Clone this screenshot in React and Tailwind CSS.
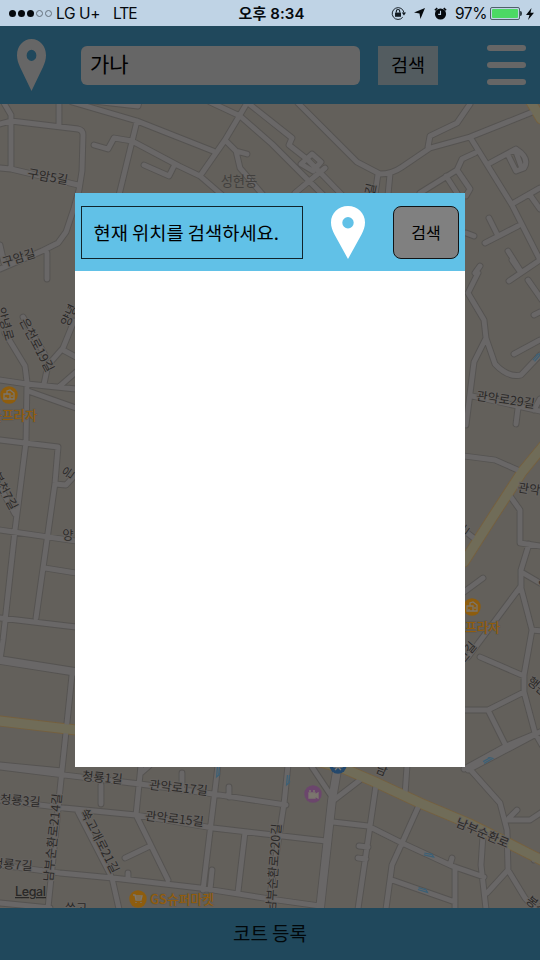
const roads = [
  'M0 124 L11 121 L78 129 Q83 130 83 135 L82 171 L79 190 L74 208 L66 232 L58 243 L42 251 L0 269',
  'M4 103 L11 115 V168', 'M0 168 L11 169 L78 185', 'M59 103 V126', 'M72 102 L137 121 L213 151',
  'M137 121 L119 195', 'M94 145 L108 149 L114 138 L132 141 L179 166 L200 176 L222 195',
  'M144 165 L169 176 L175 164', 'M210 102 L240 116 L272 144 L324 196', 'M200 176 L225 140 L247 103',
  'M248 103 L292 138 L289 145 L308 160 L342 195', 'M225 140 L236 151 L247 154', 'M236 151 L240 168 L263 195', 'M84 100 L138 106 L139 102',
  'M301 164 L312 154 L321 162 L313 171 Z', 'M295 193 L325 168',
  'M298 103 L357 162 L380 174 Q392 174 402 167 L430 148 L470 137 L535 111', 'M470 104 L457 123 L430 136 L428 147',
  'M470 137 L512 205 L540 260', 'M475 153 L462 159 L457 170 L420 193', 'M446 176 L457 193', 'M457 170 L470 189 L466 196', 'M378 174 L375 195', 'M390 174 L388 195',
  'M490 163 L516 149 Q530 158 524 168 L516 171 L508 155', 'M516 152 L521 166', 'M512 204 L540 188', 'M530 195 L540 209', 'M485 243 L518 226', 'M489 218 L497 234', 'M508 251 L520 270', 'M466 233 L474 236', 'M475 273 L480 266',
  'M478 273 L468 293 L484 320 L486 338 L474 362 L466 425', 'M486 338 L495 364 Q508 378 521 375 L540 355', 'M514 354 L540 340', 'M509 281 L540 260', 'M512 260 L519 270', 'M534 315 L540 312', 'M528 280 L542 300',
  'M472 396 L540 411', 'M518 408 L516 424', 'M534 410 L540 399', 'M464 456 L495 460 L520 471', 'M510 496 L520 510 V543 L540 546', 'M529 544 L521 570 V588 L532 630 L524 675 V692 L535 733 L542 745',
  'M521 586 L468 657', 'M483 578 L464 592', 'M523 573 L540 583', 'M532 630 L542 631', 'M480 657 L524 676', 'M524 692 L488 710 H464', 'M488 710 L506 746', 'M542 731 L506 746 L464 769', 'M466 532 L475 539',
  'M47 253 V279', 'M0 245 L4 263', 'M0 380 L27 384 L76 389', 'M5 333 L25 366 L27 382 L26 442 L15 530 L3 640 L0 660', 'M28 391 L76 408', 'M44 384 L48 365 L63 348 L74 321', 'M63 350 L76 357', 'M60 386 L76 372', 'M0 440 L58 447 L55 483 L36 618', 'M55 484 L66 485 L76 474', 'M0 487 L15 514', 'M23 317 L45 355',
  'M0 530 L76 541', 'M45 568 L76 573', 'M0 618 L76 627', 'M72 675 L62 770 L48 908', 'M0 765 L62 771',
  'M0 767 L64 775 L140 784 L213 794 L286 805', 'M0 800 L64 808 L136 815 L213 828 L326 841', 'M0 865 L60 873 L113 878 L200 888 L270 899 L320 906', 'M0 903 L50 908',
  'M141 765 L136 815 L168 880', 'M149 766 L141 773', 'M148 847 L125 858', 'M101 785 V804', 'M182 773 V790', 'M218 765 L203 890', 'M229 787 V797', 'M245 832 L238 892', 'M212 870 L210 890', 'M78 812 L112 878 L119 909', 'M128 873 V878',
  'M288 765 L284 804 L270 895', 'M312 767 L330 794', 'M334 800 L360 780', 'M333 822 L368 826 L402 843 L452 866 L484 877', 'M376 785 L358 909', 'M420 803 L402 843 L392 865 L386 909', 'M407 766 L405 795', 'M392 880 L455 902', 'M455 867 V909', 'M483 835 L481 865 L486 909', 'M487 893 L508 870', 'M452 858 L450 865', 'M359 846 L368 847', 'M358 858 L366 859',
  'M468 767 L500 803 L507 830 L508 870 L525 898 L535 909', 'M507 820 H530 L542 812', 'M509 818 L517 810', 'M468 770 L510 748 L542 731', 'M540 856 L534 860',
]
const wideRoads = ['M0 660 L76 672', 'M338 765 L332 800 L320 909']
const avenues = ['M0 721 L76 730', 'M545 444 L522 472 L492 518 L464 562', 'M314 760 L345 769 L375 782 L420 803 L470 824 L510 844 L545 862', 'M531 102 L541 119']

// One-way arrows: x, y, angle
const arrows = [[218, 772, 95], [288, 780, 95], [488, 760, -30], [537, 357, -50], [429, 855, 12], [423, 890, 17]]

const labels = [
  ['구암5길', 47, 181, 10], ['구암길', 20, 262, -17], ['안녕로', 1, 325, 74], ['은천로19길', 33, 347, 62], ['양', 68, 540, 0], ['양녕', 73, 317, -65],
  ['관악로29길', 505, 404, 8], ['관악로', 534, 494, 8], ['행운', 535, 690, 40], ['행', 541, 584, 45], ['길', 375, 190, -78], ['신길', 470, 655, -50], ['은', 467, 531, -55],
  ['봉천7길', 1, 493, 62], ['청룡1길', 102, 782, 5], ['관악로17길', 178, 792, 6], ['관악로15길', 174, 823, 6], ['청룡3길', 20, 805, 4], ['청룡7길', 12, 869, 4],
  ['남부순환로214길', 57, 838, -84], ['쑥고개로21길', 96, 843, 63], ['남부순환로220길', 278, 868, -86], ['남부순환로', 481, 837, 23], ['봉천', 534, 909, 38], ['쑥고', 76, 913, 0], ['은', 72, 475, -55], ['남', 380, 774, 22],
]

function Pin({ className, fill }) {
  return (
    <svg viewBox="0 0 34 53" className={className} preserveAspectRatio="none" aria-hidden="true">
      <path fill={fill} fillRule="evenodd" d="M17 0C7.4 0 0 7.2 0 16.5c0 4.4 1.4 7.8 3.5 12L17 53l13.500-24.500C32.600 24.300 34 20.900 34 16.500 34 7.200 26.600 0 17 0Zm0 11a5.700 5.700 0 1 1 0 11.400A5.700 5.700 0 0 1 17 11Z" />
    </svg>
  )
}

function Poi({ x, y, color, kind }) {
  return (
    <g transform={`translate(${x} ${y})`}>
      <circle r="8.700" fill={color} />
      <g fill="none" stroke="#7b766e" strokeWidth="1.300">
        {kind === 'shop' && <path d="M-5-1H1V4H-5ZM-2-1V-4L1-5L5-2V4H1M-3 2V4M3 0V2" />}
        {kind === 'cart' && <path d="M-5-4H-3L-2 1H3L4-3H-3M-2 3V4M3 3V4M-2-1H3" />}
        {kind === 'film' && <path fill="#7b766e" d="M-4-1H2V4H-4ZM2 1L5-1V4L2 2M-4-3H-2M0-3H2" />}
        {kind === 'metro' && <path d="M-4-4H4V2H-4ZM-3 5L0 2L3 5M-3-1H3" />}
      </g>
    </g>
  )
}

function StreetMap() {
  const common = { fill: 'none', strokeLinejoin: 'round', strokeLinecap: 'round' }
  return (
    <svg viewBox="0 104 540 804" className="block h-[804px] w-[540px]" aria-label="지도">
      <rect y="104" width="540" height="804" fill="#63605b" />
      <g {...common}>
        <path d={roads.join(' ')} stroke="#555351" strokeWidth="6.800" />
        <path d={wideRoads.join(' ')} stroke="#555351" strokeWidth="9.500" />
        <path d={avenues.join(' ')} stroke="#75603f" strokeWidth="11" />
        <path d={roads.join(' ')} stroke="#696767" strokeWidth="4.900" />
        <path d={wideRoads.join(' ')} stroke="#696767" strokeWidth="7.800" />
        <path d={avenues.join(' ')} stroke="#706c58" strokeWidth="9.200" />
      </g>
      <g stroke="#3d6075" strokeWidth="1.200" fill="none">
        {arrows.map(([x, y, angle]) => (
          <path key={`${x}-${y}`} transform={`translate(${x} ${y}) rotate(${angle})`} d="M-5-1H3L5 1H-5M3-1L1-2" />
        ))}
      </g>
      <g fill="#2b2928" stroke="#666360" strokeWidth="2" paintOrder="stroke" fontSize="12.300" textAnchor="middle" className="font-['Noto_Sans_CJK_KR',sans-serif]">
        {labels.map(([name, x, y, angle]) => (
          <text key={`${name}-${x}`} transform={`translate(${x} ${y}) rotate(${angle})`}>{name}</text>
        ))}
      </g>
      <text x="239" y="186" fontSize="13.300" fill="#42403e" textAnchor="middle" className="font-['Noto_Sans_CJK_KR',sans-serif]">성현동</text>
      <Poi x={9} y={395} color="#8e5d0e" kind="shop" />
      <Poi x={472} y={607} color="#8e5d0e" kind="shop" />
      <Poi x={138} y={899} color="#8e5d0e" kind="cart" />
      <Poi x={313} y={794} color="#6b466c" kind="film" />
      <Poi x={338} y={765} color="#24486c" kind="metro" />
      <g fontSize="12.700" fill="#925d0c" stroke="#5f5a52" strokeWidth="1.500" paintOrder="stroke" className="font-['Noto_Sans_CJK_KR',sans-serif] font-medium">
        <text x="37" y="420" textAnchor="end">서울프라자</text>
        <text x="500" y="632" textAnchor="end">서울프라자</text>
        <text x="150" y="904" textLength="64">GS슈퍼마켓</text>
      </g>
      <text x="15" y="896" fontSize="12.500" fill="#292827" textDecoration="underline" textLength="31" className="font-[Inter,sans-serif] font-medium">Legal</text>
    </svg>
  )
}

function StatusBar() {
  return (
    <header className="grid h-[26px] shrink-0 grid-cols-[1fr_auto_1fr] items-center bg-[#bfd3e5] pl-[9px] pr-[6px] pt-px font-[Inter,'Noto_Sans_CJK_KR',sans-serif] text-[15.500px] leading-none tracking-[-0.4px] text-[#05090d]">
      <div className="flex items-center whitespace-nowrap">
        <div className="mr-1 flex gap-[2px]">
          <i className="size-[7px] rounded-full bg-[#05090d]" />
          <i className="size-[7px] rounded-full bg-[#05090d]" />
          <i className="size-[7px] rounded-full bg-[#05090d]" />
          <i className="size-[7px] rounded-full border border-[#65717c]" />
          <i className="size-[7px] rounded-full border border-[#65717c]" />
        </div>
        <span>LG U+</span>
        <span className="ml-[13px] tracking-[-1.1px]">LTE</span>
      </div>
      <div className="text-[15px] font-semibold tracking-[0.1px]">오후 8:34</div>
      <div className="flex items-center justify-end">
        <svg viewBox="0 0 16 16" className="mr-[8px] size-[15px]" fill="none" stroke="#111a21">
          <path d="M12.500 12A6.300 6.300 0 1 1 13.800 7" strokeWidth="1" />
          <path d="M11.500 7H16L13.800 10Z" fill="#111a21" stroke="none" />
          <path d="M4.300 7H10.700V11.500H4.300Z" fill="#111a21" stroke="none" />
          <path d="M5.700 7V5.500a1.800 1.800 0 0 1 3.600 0V7" strokeWidth="1.200" />
        </svg>
        <svg viewBox="0 0 12 12" className="mr-[9px] size-[11px]"><path d="M12 0L7 12L6 6L0 5Z" fill="#05090d" /></svg>
        <svg viewBox="0 0 14 14" className="mr-[8px] size-[13px]">
          <circle cx="7" cy="7.500" r="6" fill="#05090d" />
          <path d="M1 3.500L3.500 1.200M10.500 1.200L13 3.500" stroke="#05090d" strokeWidth="1.800" />
          <path d="M7 4V8H4.500" stroke="#bfd3e5" strokeWidth="1.200" fill="none" />
        </svg>
        <span className="mr-[3px]">97%</span>
        <div className="flex h-[13px] w-[30px] rounded-[2px] border border-[#51616b] p-px"><div className="flex-1 rounded-[1px] bg-[#4cd964]" /></div>
        <i className="mr-[4px] h-[5px] w-[2px] rounded-r bg-[#35434c]" />
        <svg viewBox="0 0 8 12" className="h-[12px] w-[8px]"><path d="M5.500 0L0 7H3.500L2 12L8 4.700H4.500Z" fill="#05090d" /></svg>
      </div>
    </header>
  )
}

export default function App() {
  return (
    <div className="relative flex h-[960px] w-[540px] flex-col overflow-hidden bg-[#63605b] font-['Noto_Sans_CJK_KR',sans-serif] text-black">
      <StatusBar />
      <nav className="flex h-[78px] shrink-0 items-center bg-[#20485c] pl-[17px] pr-[14px]">
        <Pin className="h-[52px] w-[29px]" fill="#666" />
        <div className="ml-[35px] flex h-[39px] w-[279px] items-center rounded-[6px] bg-[#666] pl-[9px] pb-[2px] text-[21px]">가나</div>
        <button className="ml-[18px] h-[39px] w-[60px] bg-[#535c60] pb-px text-[18.500px]">검색</button>
        <div className="ml-auto flex h-[40px] w-[39px] flex-col justify-between">
          <i className="h-[6px] rounded-full bg-[#666]" />
          <i className="h-[6px] rounded-full bg-[#666]" />
          <i className="h-[6px] rounded-full bg-[#666]" />
        </div>
      </nav>
      <main className="h-[804px] shrink-0"><StreetMap /></main>
      <footer className="flex h-[52px] shrink-0 items-center justify-center bg-[#20485c] pb-[2px] text-[19px] text-[#02080b]">코트 등록</footer>
      <section role="dialog" className="absolute left-[74.5px] top-[193px] flex h-[574px] w-[390.5px] flex-col bg-white">
        <div className="flex h-[78px] items-center bg-[#61c1e7] pl-[6px] pr-[6px]">
          <div className="flex h-[53px] w-[222px] items-center whitespace-nowrap border-[1.500px] border-[#10242c] pl-[12px] text-[18.700px]">현재 위치를 검색하세요.</div>
          <Pin className="ml-[28.500px] h-[53px] w-[34px]" fill="#fff" />
          <button className="ml-auto h-[53px] w-[66px] rounded-[8px] border-[1.500px] border-[#101416] bg-[#808080] text-[16px]">검색</button>
        </div>
      </section>
    </div>
  )
}
